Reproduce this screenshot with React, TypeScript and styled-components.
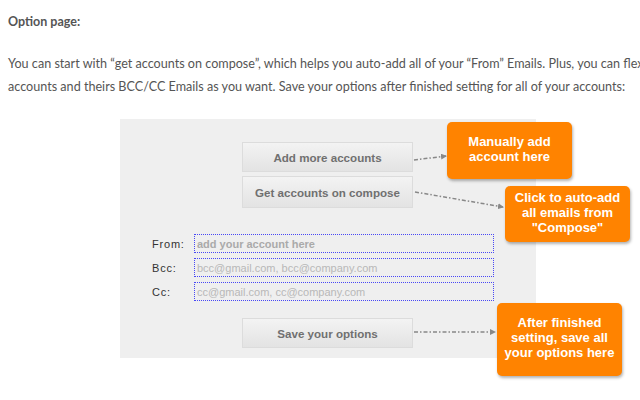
import React from "react";
import styled, { createGlobalStyle } from "styled-components";

const Global = createGlobalStyle`
  html, body { margin: 0; padding: 0; background: #fff; overflow: hidden; }
  body { padding: 8px; font-family: Lato, "Open Sans", sans-serif; }
`;

const Page = styled.div`
  width: 760px;
  color: #555;
`;

const Heading = styled.p`
  margin: 6px 0 0;
  font-size: 12.5px;
  font-weight: 700;
  line-height: 16px;
`;

const Para = styled.p`
  margin: 22px 0 0;
  font-size: 12.6px;
  line-height: 23px;
  white-space: nowrap;
`;

const Figure = styled.div`
  position: relative;
  margin: 21px 0 0 112px;
  width: 520px;
  height: 260px;
`;

const Panel = styled.div`
  width: 416px;
  height: 239px;
  box-sizing: border-box;
  background: #efefef;
  padding: 23px 0 0;
  display: flex;
  flex-direction: column;
  font-family: "Liberation Sans", Arial, sans-serif;
`;

const ButtonStack = styled.div`
  display: flex;
  flex-direction: column;
  gap: 4px;
  margin-left: 122px;
`;

const Btn = styled.div<{ $h?: number }>`
  width: 171px;
  height: ${(p) => p.$h ?? 30}px;
  box-sizing: border-box;
  border: 1px solid #dcdcdc;
  background: linear-gradient(#f3f3f3, #e3e3e3);
  display: flex;
  align-items: center;
  justify-content: center;
  font-size: 11.6px;
  font-weight: 700;
  color: #707070;
`;

const Form = styled.div`
  display: flex;
  flex-direction: column;
  gap: 5px;
  margin: 26px 0 0 32px;
`;

const Row = styled.div`
  display: flex;
  align-items: center;
  height: 19px;
`;

const Label = styled.span`
  width: 42px;
  font-size: 11px;
  color: #333;
  letter-spacing: 0.8px;
`;

const Field = styled.div<{ $bold?: boolean }>`
  width: 300px;
  height: 19px;
  box-sizing: border-box;
  border: 1px dotted #4848f5;
  padding-left: 2px;
  display: flex;
  align-items: center;
  font-size: 11px;
  font-weight: ${(p) => (p.$bold ? 700 : 400)};
  color: ${(p) => (p.$bold ? "#aaa" : "#b8b8b8")};
`;

const SaveWrap = styled.div`
  margin: 17px 0 0 122px;
`;

const Callout = styled.div<{ $x: number; $y: number; $h: number }>`
  position: absolute;
  left: ${(p) => p.$x}px;
  top: ${(p) => p.$y}px;
  width: 125px;
  height: ${(p) => p.$h}px;
  box-sizing: border-box;
  background: #ff8300;
  border-radius: 5px;
  box-shadow: 1px 2px 3px rgba(0, 0, 0, 0.3);
  color: #fff;
  font-family: "Liberation Sans", Arial, sans-serif;
  font-weight: 700;
  font-size: 13px;
  line-height: 15px;
  text-align: center;
  display: flex;
  align-items: center;
  justify-content: center;
  padding-bottom: 4px;
`;

const Arrows = styled.svg`
  position: absolute;
  left: 0;
  top: 0;
  width: 520px;
  height: 260px;
  pointer-events: none;
`;

export default function App() {
  return (
    <>
      <Global />
      <Page>
        <Heading>Option page:</Heading>
        <Para>
          You can start with “get accounts on compose”, which helps you auto-add all of your “From” Emails. Plus, you can flexbily add more
          <br />
          accounts and theirs BCC/CC Emails as you want. Save your options after finished setting for all of your accounts:
        </Para>
        <Figure>
          <Panel>
            <ButtonStack>
              <Btn $h={30}>Add more accounts</Btn>
              <Btn $h={32}>Get accounts on compose</Btn>
            </ButtonStack>
            <Form>
              <Row>
                <Label>From:</Label>
                <Field $bold>add your account here</Field>
              </Row>
              <Row>
                <Label>Bcc:</Label>
                <Field>bcc@gmail.com, bcc@company.com</Field>
              </Row>
              <Row>
                <Label>Cc:</Label>
                <Field>cc@gmail.com, cc@company.com</Field>
              </Row>
            </Form>
            <SaveWrap>
              <Btn $h={30}>Save your options</Btn>
            </SaveWrap>
          </Panel>
          <Arrows viewBox="0 0 520 260">
            <defs>
              <marker id="ah" markerWidth="6" markerHeight="6" refX="5" refY="3" orient="auto" markerUnits="userSpaceOnUse">
                <path d="M0,0 L6,3 L0,6 Z" fill="#888" />
              </marker>
            </defs>
            <g stroke="#888" strokeWidth="1.5" fill="none" strokeDasharray="4 2 1.5 2" markerEnd="url(#ah)">
              <line x1="294" y1="41" x2="326" y2="37" />
              <line x1="295" y1="73" x2="383" y2="88" />
              <line x1="294" y1="213" x2="375" y2="213" />
            </g>
          </Arrows>
          <Callout $x={327} $y={3} $h={57}>
            Manually add
            <br />
            account here
          </Callout>
          <Callout $x={385} $y={67} $h={56}>
            Click to auto-add
            <br />
            all emails from
            <br />
            "Compose"
          </Callout>
          <Callout $x={377} $y={184} $h={73}>
            After finished
            <br />
            setting, save all
            <br />
            your options here
          </Callout>
        </Figure>
      </Page>
    </>
  );
}
